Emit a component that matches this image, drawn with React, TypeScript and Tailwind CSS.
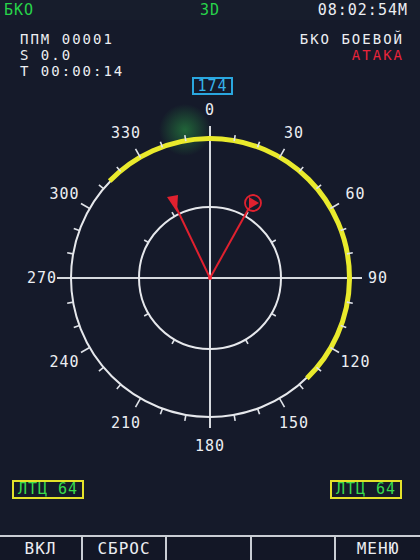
import React from "react";

const CX = 210;
const CY = 278;
const R = 139;
const RI = 71;

const pt = (deg: number, r: number) => {
  const a = (deg * Math.PI) / 180;
  return [CX + r * Math.sin(a), CY - r * Math.cos(a)];
};

const arc = (from: number, to: number, r: number) => {
  const [x1, y1] = pt(from, r);
  const [x2, y2] = pt(to, r);
  const span = (to - from + 360) % 360;
  return `M ${x1} ${y1} A ${r} ${r} 0 ${span > 180 ? 1 : 0} 1 ${x2} ${y2}`;
};

const labels = [0, 30, 60, 90, 120, 150, 180, 210, 240, 270, 300, 330];

const Compass = () => {
  const ticks: React.ReactNode[] = [];
  for (let d = 0; d < 360; d += 10) {
    if (d % 90 === 0) continue;
    const len = d % 30 === 0 ? 10 : 6;
    const [x1, y1] = pt(d, R);
    const [x2, y2] = pt(d, R + len);
    ticks.push(<line key={"o" + d} x1={x1} y1={y1} x2={x2} y2={y2} stroke="#dfe2e8" strokeWidth={1.6} />);
  }
  for (let d = 30; d < 360; d += 30) {
    if (d % 90 === 0) continue;
    const [x1, y1] = pt(d, RI);
    const [x2, y2] = pt(d, RI + 5);
    ticks.push(<line key={"i" + d} x1={x1} y1={y1} x2={x2} y2={y2} stroke="#dfe2e8" strokeWidth={1.6} />);
  }

  return (
    <svg width={420} height={375} viewBox="0 95 420 375" className="block">
      <defs>
        <radialGradient id="glow">
          <stop offset="0%" stopColor="#2fbf4a" stopOpacity={0.45} />
          <stop offset="100%" stopColor="#2fbf4a" stopOpacity={0} />
        </radialGradient>
      </defs>
      <circle cx={185} cy={130} r={26} fill="url(#glow)" />

      <line x1={CX} y1={126} x2={CX} y2={428} stroke="#d6d9de" strokeWidth={2} />
      <line x1={57} y1={CY} x2={362} y2={CY} stroke="#d6d9de" strokeWidth={2} />

      <circle cx={CX} cy={CY} r={R} fill="none" stroke="#e6e8ec" strokeWidth={2} />
      <circle cx={CX} cy={CY} r={RI} fill="none" stroke="#e6e8ec" strokeWidth={2} />
      <path d={arc(314, 136, R + 0.5)} fill="none" stroke="#e9ea2c" strokeWidth={5} />
      {ticks}

      {labels.map((d) => {
        const [x, y] = pt(d, 168);
        return (
          <text
            key={d}
            x={x}
            y={y}
            textAnchor="middle"
            dominantBaseline="central"
            fill="#eceef2"
            fontSize={15}
            letterSpacing={1}
            fontFamily='"DejaVu Sans Mono", monospace'
          >
            {d}
          </text>
        );
      })}

      <line x1={CX} y1={CY} x2={176} y2={207} stroke="#e0212f" strokeWidth={2} />
      <polygon points="167,197 178,195 177,212" fill="#e0212f" />
      <line x1={CX} y1={CY} x2={249} y2={208} stroke="#e0212f" strokeWidth={2} />
      <circle cx={253} cy={203} r={8} fill="none" stroke="#e0212f" strokeWidth={1.8} />
      <polygon points="249,197 249,209 259,203" fill="#e0212f" />
      <circle cx={CX} cy={CY} r={2} fill="#ff2a3a" />
    </svg>
  );
};

export default function App() {
  return (
    <div
      className="w-[420px] h-[560px] bg-[#151a2a] flex flex-col overflow-hidden text-[15px] tracking-[1px] text-[#eceef2]"
      style={{ fontFamily: '"DejaVu Sans Mono", monospace' }}
    >
      <div className="h-[20px] flex items-center justify-between px-1 leading-4 bg-[#171d2c]">
        <span className="text-[#27d44a] w-[120px]">БКО</span>
        <span className="text-[#27d44a]">3D</span>
        <span className="w-[120px] text-right pr-[8px]">08:02:54M</span>
      </div>

      <div className="h-[57px] pt-[11px] px-5 flex justify-between text-[14px] leading-4 tracking-[2px]">
        <div className="flex flex-col">
          <span>ППМ 00001</span>
          <span>S 0.0</span>
          <span>T 00:00:14</span>
        </div>
        <div className="flex flex-col items-end -mr-[4px]">
          <span>БКО БОЕВОЙ</span>
          <span className="text-[#e8243a]">АТАКА</span>
        </div>
      </div>

      <div className="h-[18px] flex justify-center">
        <div className="ml-[5px] w-[41px] h-[18px] border-2 border-[#2aa7df] text-[#36b3ea] flex items-center justify-center leading-none">
          174
        </div>
      </div>

      <Compass />

      <div className="mt-[10px] h-[19px] px-3 flex justify-between">
        <div className="w-[72px] h-[19px] border-2 border-[#e4e22a] text-[#39dc4c] flex items-center justify-center leading-none">
          ЛТЦ 64
        </div>
        <div className="w-[72px] h-[19px] border-2 border-[#e4e22a] text-[#39dc4c] flex items-center justify-center leading-none mr-[6px]">
          ЛТЦ 64
        </div>
      </div>

      <div className="flex-1" />

      <div className="h-[25px] border-t-2 border-[#c9cdd4] flex text-[16px] bg-[#131726]">
        <div className="w-[81px] flex items-center justify-center">ВКЛ</div>
        <div className="w-[84px] border-l-2 border-[#c9cdd4] flex items-center justify-center">СБРОС</div>
        <div className="w-[85px] border-l-2 border-[#c9cdd4]" />
        <div className="w-[84px] border-l-2 border-[#c9cdd4]" />
        <div className="flex-1 border-l-2 border-[#c9cdd4] flex items-center justify-center">МЕНЮ</div>
      </div>
    </div>
  );
}
